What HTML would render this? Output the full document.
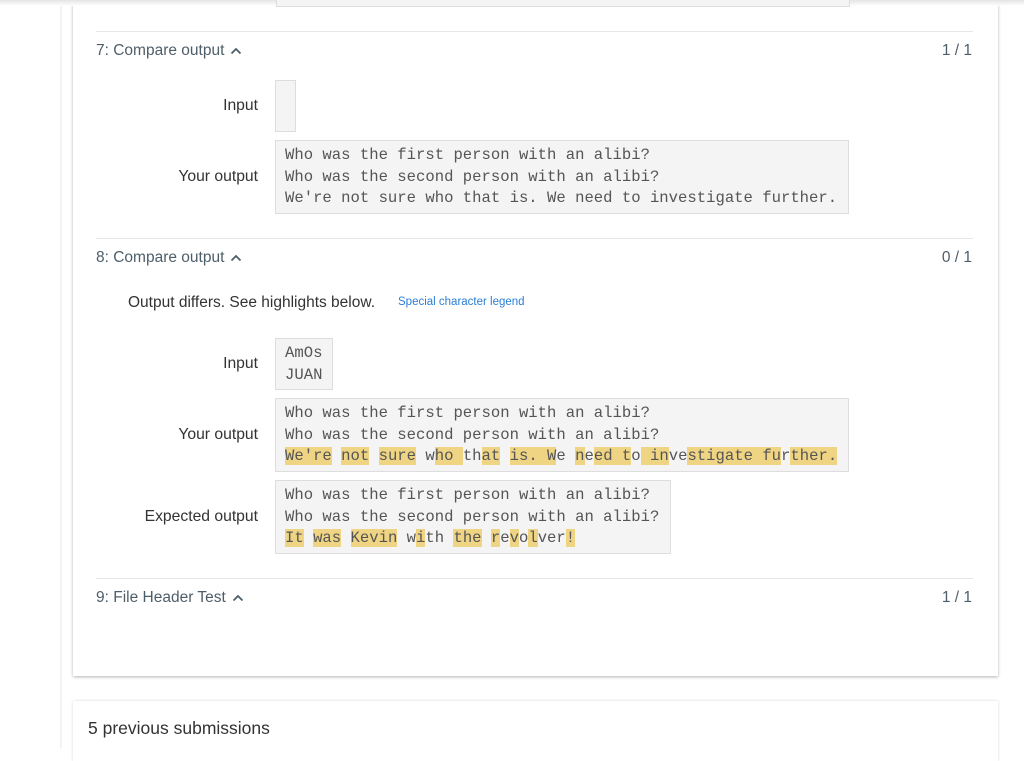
<!DOCTYPE html>
<html><head><meta charset="utf-8"><style>
*{margin:0;padding:0;box-sizing:border-box}
body{width:1024px;height:748px;overflow:hidden;background:#fff;font-family:"Liberation Sans",sans-serif;position:relative}
.vline{position:absolute;left:60px;top:0;width:2px;height:748px;background:#f3f3f3}
.topshadow{position:absolute;left:0;top:0;width:1024px;height:6px;background:linear-gradient(#e4e4e4,#fff)}
.card{position:absolute;left:73px;top:-10px;width:925px;height:686px;background:#fff;box-shadow:0 1px 3px rgba(0,0,0,.3)}
.card2{position:absolute;left:73px;top:701px;width:925px;height:60px;background:#fff;box-shadow:0 0 3px rgba(0,0,0,.15)}
.a{position:absolute}
.hr{position:absolute;left:96px;width:877px;height:1px;background:#e6e6e6}
.h{position:absolute;left:96px;font-size:15.5px;color:#4e5e69}
.h svg{vertical-align:middle;margin-left:6px}
.sc{position:absolute;right:52px;font-size:15.5px;color:#4e5e69}
.lbl{position:absolute;right:766px;font-size:15.7px;color:#333;text-align:right}
.box{position:absolute;left:275px;background:#f4f4f4;border:1px solid #ddd;font-family:"Liberation Mono",monospace;font-size:15.6px;line-height:21.5px;color:#555;padding:4px 9px;white-space:pre}
.m{background:#efd483}
</style></head><body>
<div class="vline"></div>
<div class="card"></div>
<div class="topshadow"></div>
<div class="a" style="left:276px;top:0;width:574px;height:7px;border:1px solid #ddd;border-top:none;background:#f4f4f4"></div>
<div class="hr" style="top:31px"></div>
<div class="h" style="top:42px">7: Compare output<svg width="12" height="8" viewBox="0 0 12 8"><path d="M1.5 6.5L6 2l4.5 4.5" stroke="#4e5e69" stroke-width="1.8" fill="none"/></svg></div>
<div class="sc" style="top:42px">1 / 1</div>
<div class="lbl" style="top:97px">Input</div>
<div class="box" style="top:80px;width:21px;height:52px"></div>
<div class="lbl" style="top:168px">Your output</div>
<div class="box" style="top:140px;width:574px;height:74px">Who was the first person with an alibi?
Who was the second person with an alibi?
We're not sure who that is. We need to investigate further.</div>
<div class="hr" style="top:238px"></div>
<div class="h" style="top:249px">8: Compare output<svg width="12" height="8" viewBox="0 0 12 8"><path d="M1.5 6.5L6 2l4.5 4.5" stroke="#4e5e69" stroke-width="1.8" fill="none"/></svg></div>
<div class="sc" style="top:249px">0 / 1</div>
<div class="a" style="left:128px;top:294px;font-size:15.5px;color:#333">Output differs. See highlights below.</div>
<div class="a" style="left:398px;top:296px;font-size:11.5px;color:#2a7fd4">Special character legend</div>
<div class="lbl" style="top:355px">Input</div>
<div class="box" style="top:338px;width:58px;height:52px">AmOs
JUAN</div>
<div class="lbl" style="top:426px">Your output</div>
<div class="box" style="top:398px;width:574px;height:74px">Who was the first person with an alibi?
Who was the second person with an alibi?
<span class="m">We're</span> <span class="m">not</span> <span class="m">sure</span> w<span class="m">ho </span>th<span class="m">at</span> <span class="m">is. W</span>e <span class="m">n</span>e<span class="m">ed t</span>o<span class="m"> in</span>ve<span class="m">stigate fu</span>r<span class="m">ther.</span></div>
<div class="lbl" style="top:508px">Expected output</div>
<div class="box" style="top:480px;width:396px;height:74px">Who was the first person with an alibi?
Who was the second person with an alibi?
<span class="m">It</span> <span class="m">was</span> <span class="m">Kevin</span> w<span class="m">i</span>th <span class="m">the</span> <span class="m">r</span>e<span class="m">v</span>o<span class="m">l</span>ver<span class="m">!</span></div>
<div class="hr" style="top:578px"></div>
<div class="h" style="top:589px">9: File Header Test<svg width="12" height="8" viewBox="0 0 12 8"><path d="M1.5 6.5L6 2l4.5 4.5" stroke="#4e5e69" stroke-width="1.8" fill="none"/></svg></div>
<div class="sc" style="top:589px">1 / 1</div>
<div class="card2"></div>
<div class="a" style="left:88px;top:718px;font-size:17.5px;color:#333">5 previous submissions</div>
</body></html>
